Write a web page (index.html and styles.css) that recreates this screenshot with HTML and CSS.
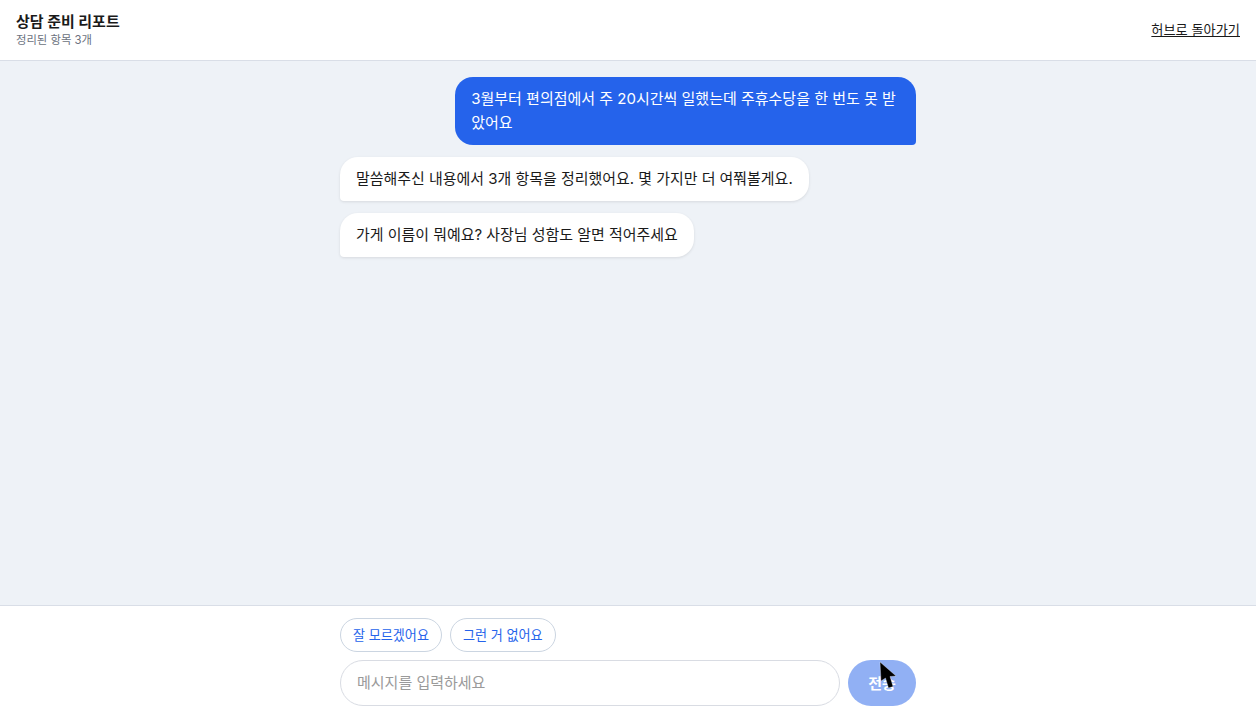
FILE: index.html
```html
<!DOCTYPE html>
<html lang="ko">
<head>
<meta charset="utf-8">
<title>상담 준비 리포트</title>
<link rel="stylesheet" href="styles.css">
</head>
<body>
<div class="app">
  <header class="header">
    <div class="header-text">
      <div class="title">상담 준비 리포트</div>
      <div class="subtitle">정리된 항목 3개</div>
    </div>
    <a class="back" href="#">허브로 돌아가기</a>
  </header>
  <main class="chat">
    <div class="thread">
      <div class="bubble user">3월부터 편의점에서 주 20시간씩 일했는데 주휴수당을 한 번도 못 받았어요</div>
      <div class="bubble bot">말씀해주신 내용에서 3개 항목을 정리했어요. 몇 가지만 더 여쭤볼게요.</div>
      <div class="bubble bot">가게 이름이 뭐예요? 사장님 성함도 알면 적어주세요</div>
    </div>
  </main>
  <footer class="composer">
    <div class="composer-inner">
      <div class="chips">
        <button class="chip">잘 모르겠어요</button>
        <button class="chip">그런 거 없어요</button>
      </div>
      <div class="input-row">
        <input class="input" type="text" placeholder="메시지를 입력하세요">
        <button class="send">전송</button>
      </div>
    </div>
  </footer>
</div>
<svg class="cursor" width="18" height="28" viewBox="0 0 18 28" aria-hidden="true"><path d="M1 1 L2 20 L6.5 17 L9.5 27 L14 25.5 L11 15.5 L17 15 Z" fill="#000" stroke="#fff" stroke-opacity="0.5" stroke-width="0.6"/></svg>
</body>
</html>
```
FILE: styles.css
```css
* { box-sizing: border-box; }
html, body { margin: 0; height: 100%; }
body {
  font-family: Inter, "Noto Sans CJK KR", sans-serif;
  color: #1a1a1a;
  background: #fff;
  overflow: hidden;
}
.app { display: flex; flex-direction: column; height: 718px; }
.header {
  display: flex;
  justify-content: space-between;
  align-items: center;
  height: 61px;
  padding: 0 16px;
  background: #fff;
  border-bottom: 1px solid #d9dee7;
}
.title { font-size: 15px; font-weight: 700; line-height: 20px; color: #1a1a1a; }
.subtitle { font-size: 11.35px; line-height: 16px; color: #6b7280; }
.back { font-size: 13.2px; line-height: 18px; color: #1a1a1a; text-decoration: underline; }
.chat { flex: 1; background: #eef2f7; padding: 16px 0 0; min-height: 0; }
.thread { width: 576px; margin: 0 auto; display: flex; flex-direction: column; gap: 12px; }
.bubble { padding: 10px 16px; line-height: 24px; border-radius: 18px; }
.user { max-width: 80%; font-size: 15px; align-self: flex-end; background: #2563eb; color: #fff; border-bottom-right-radius: 4px; }
.bot { max-width: 85%; font-size: 14.96px; align-self: flex-start; background: #fff; color: #1a1a1a; border-bottom-left-radius: 4px; box-shadow: 0 1px 3px rgba(0, 0, 0, 0.1); }
.composer { background: #fff; border-top: 1px solid #d9dee7; padding: 12px 0; }
.composer-inner { width: 576px; margin: 0 auto; display: flex; flex-direction: column; gap: 8px; }
.chips { display: flex; gap: 8px; }
.chip {
  height: 34px;
  padding: 0 12px 2px;
  font: 13.1px Inter, "Noto Sans CJK KR", sans-serif;
  color: #2563eb;
  background: #fff;
  border: 1px solid #cbd5e1;
  border-radius: 17px;
}
.input-row { display: flex; gap: 8px; }
.input {
  flex: 1;
  min-width: 0;
  height: 46px;
  padding: 0 16px 2px;
  font: 15px Inter, "Noto Sans CJK KR", sans-serif;
  border: 1px solid #d9dce3;
  border-radius: 23px;
  outline: none;
}
.input::placeholder { color: #9a9a9a; opacity: 1; }
.send {
  width: 68px;
  height: 46px;
  padding: 0 0 2px;
  font: 700 15px Inter, "Noto Sans CJK KR", sans-serif;
  color: #fff;
  background: #2563eb;
  opacity: 0.5;
  border: 0;
  border-radius: 23px;
}
.cursor { position: absolute; left: 879px; top: 661px; }
```
